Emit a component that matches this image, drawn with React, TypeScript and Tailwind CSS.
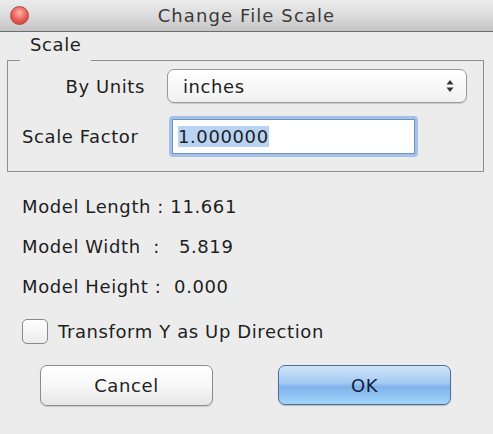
import React from 'react';

const font = { fontFamily: '"DejaVu Sans", "Liberation Sans", sans-serif' };

const SelectArrows: React.FC = () => (
  <svg width="8" height="14" viewBox="0 0 8 14" className="text-[#333]">
    <path d="M4 1 L7.5 5.5 H0.5 Z" fill="currentColor" />
    <path d="M4 13 L7.5 8.5 H0.5 Z" fill="currentColor" />
  </svg>
);

const App: React.FC = () => {
  return (
    <div
      className="w-[493px] h-[434px] bg-[#ececec] text-[#1e1e1e] flex flex-col overflow-hidden text-[18px] tracking-[0.6px]"
      style={font}
    >
      {/* title bar */}
      <div className="h-[32px] shrink-0 grid grid-cols-[1fr_auto_1fr] items-center border-b border-[#6e6e6e] bg-gradient-to-b from-[#ececec] via-[#dcdcdc] to-[#c4c4c4] px-[10px]">
        <div className="flex">
          <span className="w-[19px] h-[19px] rounded-full border border-[#b04a44] bg-[radial-gradient(circle_at_50%_35%,#ffb3a8,#e4544a_60%,#c63a30)]" />
        </div>
        <span className="text-[18px] text-[#3a3a3a] tracking-[1.1px] leading-[22px]">Change File Scale</span>
        <div />
      </div>

      {/* group box */}
      <div className="mx-[7px] mt-[2px] flex flex-col w-[477px]">
        <div className="flex items-end h-[27px]">
          <div className="w-[13px] border-t border-[#8e8e8e]" />
          <span className="px-[10px] leading-[20px] pb-[6px]">Scale</span>
          <div className="flex-1 border-t border-[#8e8e8e]" />
        </div>
        <div className="h-[111px] border-l border-r border-b border-[#8e8e8e] flex flex-col pt-[8px] gap-[13px]">
          <div className="flex items-center">
            <span className="w-[137px] text-right">By Units</span>
            <div className="ml-[22px] w-[300px] h-[34px] rounded-[7px] border border-[#9a9a9a] bg-gradient-to-b from-white to-[#f1f1f1] shadow-[0_1px_1px_rgba(0,0,0,0.15)] flex items-center justify-between pl-[15px] pr-[12px]">
              <span>inches</span>
              <SelectArrows />
            </div>
          </div>
          <div className="flex items-center">
            <span className="pl-[14px] w-[161px]">Scale Factor</span>
            <div className="w-[249px] h-[41px] rounded-[4px] bg-[#a4c2e8] p-[3px]">
              <div className="h-full bg-white border border-[#6f93c4] flex items-center pl-[5px]">
                <span className="bg-[#b8d3f3] leading-[21px]">1.000000</span>
              </div>
            </div>
          </div>
        </div>
      </div>

      {/* model info */}
      <div className="flex flex-col pl-[22px] pt-[24px] gap-[19px] whitespace-pre leading-[21px]">
        <span>Model Length : 11.661</span>
        <span>Model Width  :   5.819</span>
        <span>Model Height :  0.000</span>
      </div>

      <div className="flex items-center pl-[22px] mt-[21px] gap-[10px]">
        <span className="w-[26px] h-[25px] rounded-[5px] border border-[#8a8a8a] bg-gradient-to-b from-white to-[#ececec]" />
        <span>Transform Y as Up Direction</span>
      </div>

      <div className="flex pl-[40px] mt-[20px] gap-[65px]">
        <button className="w-[173px] h-[41px] rounded-[7px] border border-[#8c8c8c] bg-gradient-to-b from-white via-[#f7f7f7] to-[#e6e6e6] shadow-[0_1px_1px_rgba(0,0,0,0.15)] text-[#222]">
          Cancel
        </button>
        <button className="w-[173px] h-[40px] rounded-[7px] border border-[#4f6d98] bg-[linear-gradient(to_bottom,#d0e4fa_0%,#a4caf2_45%,#7fb2ea_55%,#a2d6fc_100%)] shadow-[0_1px_1px_rgba(0,0,0,0.2)] text-[#13213d]">
          OK
        </button>
      </div>
    </div>
  );
};

export default App;
